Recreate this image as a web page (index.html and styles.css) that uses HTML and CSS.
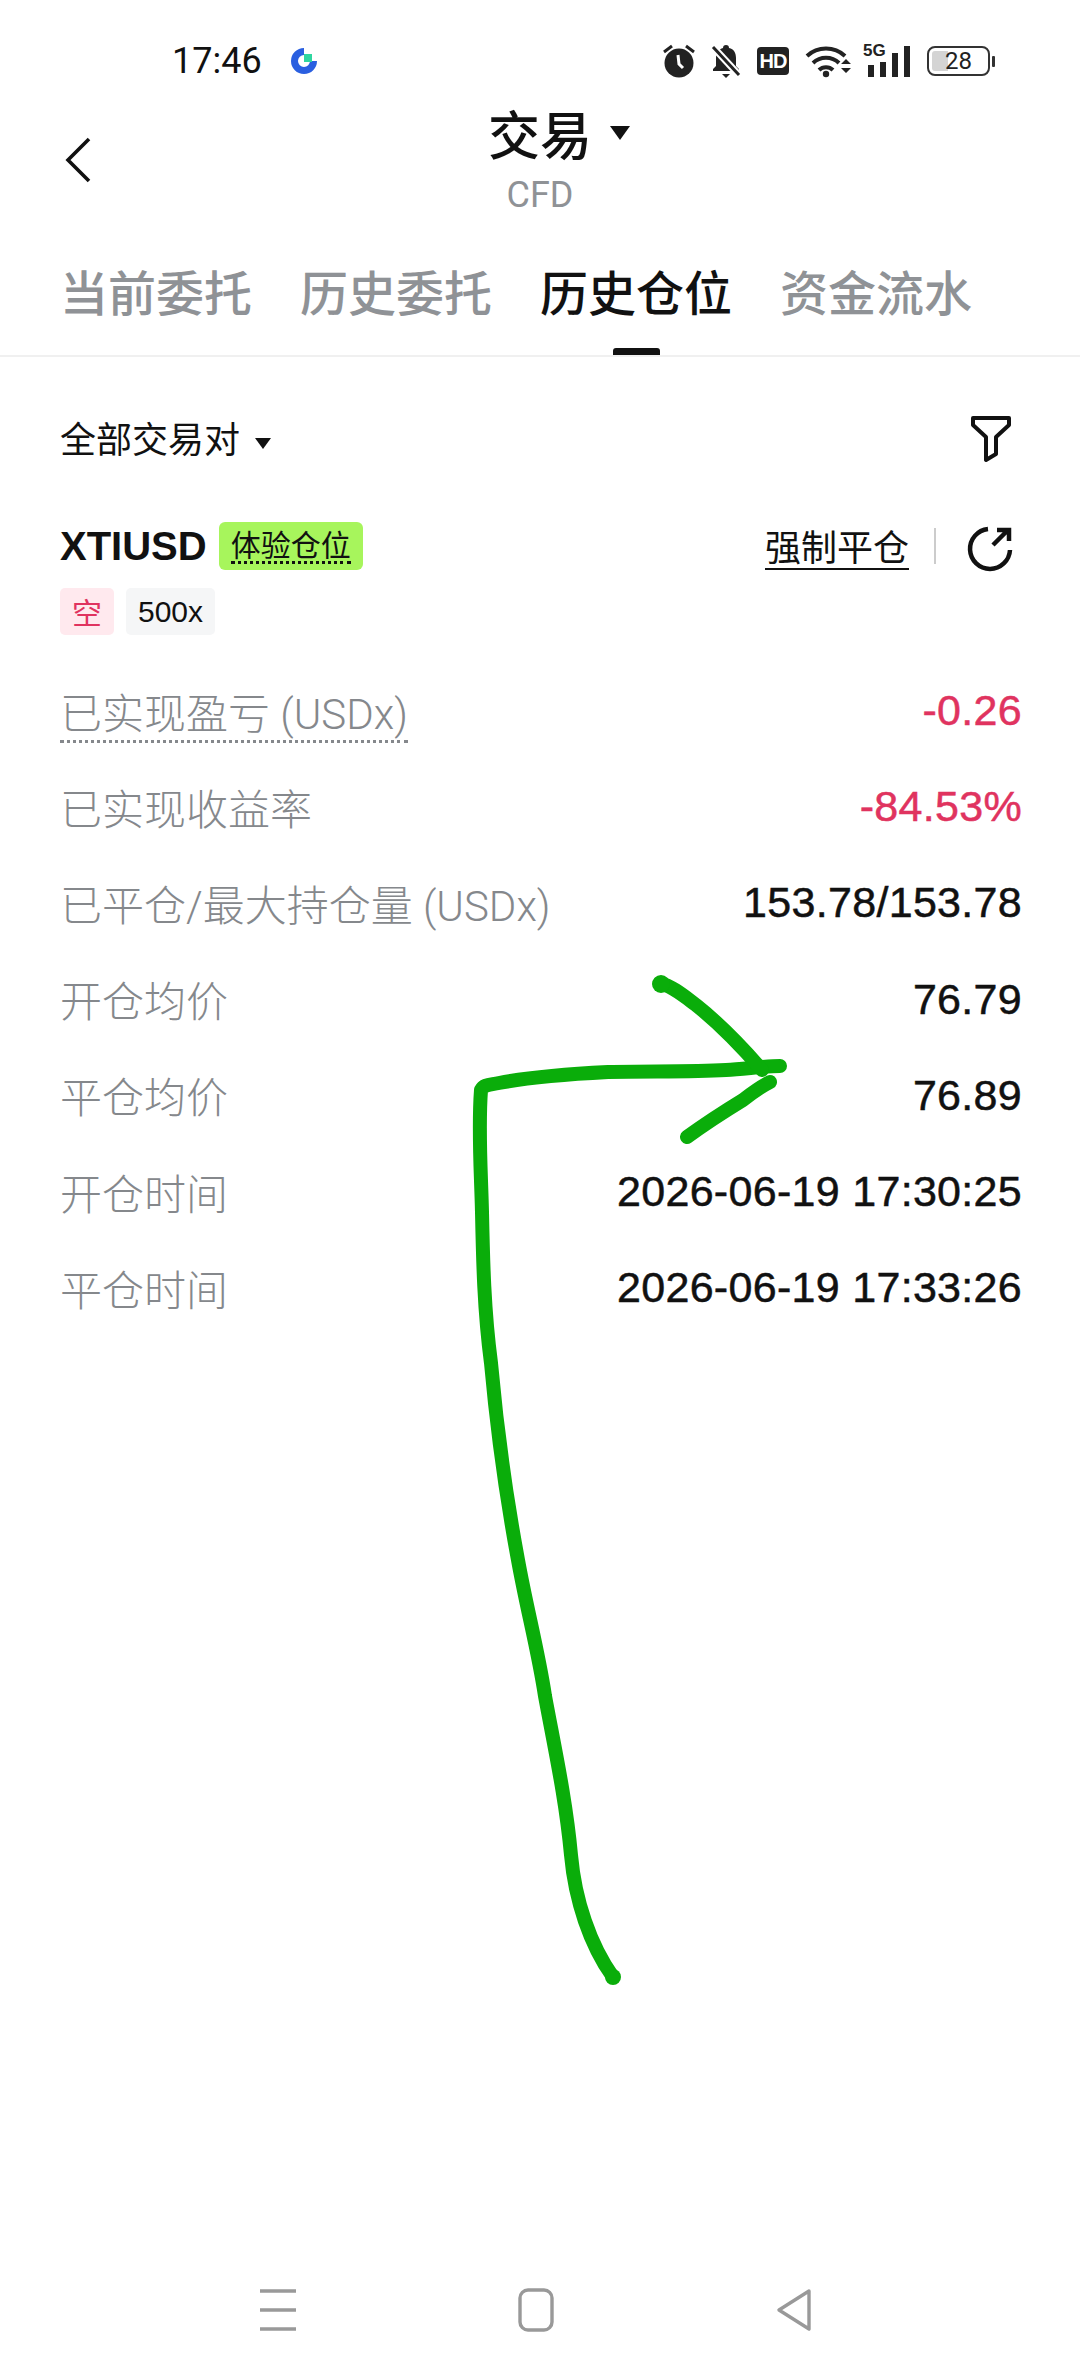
FILE: index.html
```html
<!DOCTYPE html>
<html lang="zh-CN">
<head>
  <meta charset="UTF-8">
  <meta name="viewport" content="width=device-width, initial-scale=1.0">
  <title>交易</title>
  <link rel="stylesheet" href="styles.css">
</head>
<body>

<div class="page">

  <!-- Status bar -->
  <div class="status-bar">
    <div class="status-left">
      <span class="clock">17:46</span>
      <svg class="app-dot" viewBox="0 0 26 26" width="26" height="26">
        <path d="M13 3.5A9.5 9.5 0 1 0 22.5 13" fill="none" stroke="#2a5fe0" stroke-width="7"/>
        <rect x="13" y="6" width="8" height="8" fill="#2fd6a0"/>
      </svg>
    </div>
    <div class="status-right">
      <svg class="icon-alarm" viewBox="0 0 32 34" width="32" height="34">
        <circle cx="16" cy="19" r="14.5" fill="#222"/>
        <path d="M1 8l8-6M31 8l-8-6" stroke="#222" stroke-width="3"/>
        <path d="M15 11l1 9 4 4" fill="none" stroke="#fff" stroke-width="3"/>
      </svg>
      <svg class="icon-bell" viewBox="0 0 30 34" width="30" height="34">
        <path d="M15 1c2 0 3 1 3 3 5 1 7 5 7 10v8l3 3v2H2v-2l3-3v-8c0-5 3-9 7-10 0-2 1-3 3-3z" fill="#222"/>
        <path d="M11 30h8l-4 4z" fill="#222"/>
        <path d="M2 3l26 28" stroke="#fff" stroke-width="7"/>
        <path d="M2 3l26 28" stroke="#222" stroke-width="3"/>
      </svg>
      <span class="hd">HD</span>
      <svg class="icon-wifi" viewBox="0 0 46 34" width="46" height="34">
        <path d="M2 12a28 28 0 0 1 38 0M8 19a19 19 0 0 1 26 0M14 26a10 10 0 0 1 14 0" fill="none" stroke="#222" stroke-width="4"/>
        <circle cx="21" cy="30" r="3.2" fill="#222"/>
        <path d="M36 20l5-5 5 5zM36 24l5 5 5-5z" fill="#222"/>
      </svg>
      <div class="signal">
        <span class="signal-label">5G</span>
        <svg viewBox="0 0 44 32" width="44" height="32">
          <rect x="1" y="20" width="6" height="12" fill="#222"/>
          <rect x="13" y="17" width="6" height="15" fill="#222"/>
          <rect x="25" y="8" width="6" height="24" fill="#222"/>
          <rect x="37" y="1" width="6" height="31" fill="#222"/>
        </svg>
      </div>
      <div class="battery">
        <div class="battery-body">
          <div class="battery-fill"></div>
          <span class="battery-num">28</span>
        </div>
        <div class="battery-nub"></div>
      </div>
    </div>
  </div>

  <!-- Top bar -->
  <header class="top-bar">
    <svg class="back" viewBox="0 0 26 46" width="26" height="46">
      <path d="M24 2L3 23l21 21" fill="none" stroke="#111" stroke-width="3.6"/>
    </svg>
    <div class="title-row">
      <h1>交易</h1>
      <span class="caret caret-big"></span>
    </div>
    <div class="subtitle">CFD</div>
  </header>

  <!-- Tabs -->
  <nav class="tabs">
    <a class="tab">当前委托</a>
    <a class="tab">历史委托</a>
    <a class="tab active">历史仓位</a>
    <a class="tab">资金流水</a>
  </nav>

  <section class="content">
    <div class="filter-row">
      <div class="pair-select">全部交易对<span class="caret"></span></div>
      <svg class="filter-icon" viewBox="0 0 40 48" width="40" height="48">
        <path d="M2 3h36v7L25 22v17l-10 6V22L2 10z" fill="none" stroke="#111" stroke-width="4" stroke-linejoin="round"/>
      </svg>
    </div>

    <div class="symbol-row">
      <div class="symbol">
        <span class="symbol-name">XTIUSD</span>
        <span class="trial-badge"><span>体验仓位</span></span>
      </div>
      <div class="symbol-actions">
        <a class="force-close">强制平仓</a>
        <span class="vline"></span>
        <svg class="share-icon" viewBox="0 0 46 46" width="46" height="46">
          <path d="M21 3A20 20 0 1 0 43 24" fill="none" stroke="#111" stroke-width="4.5"/>
          <path d="M26 19L41 4M30 4h12v11" fill="none" stroke="#111" stroke-width="4.5"/>
        </svg>
      </div>
    </div>

    <div class="tags">
      <span class="tag tag-short">空</span>
      <span class="tag">500x</span>
    </div>

    <dl class="rows">
      <div class="row"><dt><span class="dotted">已实现盈亏 (USDx)</span></dt><dd class="neg">-0.26</dd></div>
      <div class="row"><dt>已实现收益率</dt><dd class="neg">-84.53%</dd></div>
      <div class="row"><dt>已平仓/最大持仓量 (USDx)</dt><dd>153.78/153.78</dd></div>
      <div class="row"><dt>开仓均价</dt><dd>76.79</dd></div>
      <div class="row"><dt>平仓均价</dt><dd>76.89</dd></div>
      <div class="row"><dt>开仓时间</dt><dd>2026-06-19 17:30:25</dd></div>
      <div class="row"><dt>平仓时间</dt><dd>2026-06-19 17:33:26</dd></div>
    </dl>
  </section>

  <!-- Bottom system buttons -->
  <div class="sys-nav">
    <svg viewBox="0 0 36 44" width="36" height="44">
      <path d="M0 3h36M0 22h36M0 41h36" stroke="#999" stroke-width="3.6"/>
    </svg>
    <svg viewBox="0 0 36 44" width="36" height="44">
      <rect x="2" y="2" width="32" height="40" rx="8" fill="none" stroke="#999" stroke-width="3.4"/>
    </svg>
    <svg viewBox="0 0 36 44" width="36" height="44">
      <path d="M33 3L3 22l30 19z" fill="none" stroke="#999" stroke-width="3.4" stroke-linejoin="round"/>
    </svg>
  </div>

  <!-- Hand drawn arrow on top of the page -->
  <svg class="scribble" viewBox="0 0 1080 2376" width="1080" height="2376">
    <g fill="none" stroke="#0aad0a" stroke-width="14" stroke-linecap="round" stroke-linejoin="round">
      <path d="M613 1977C590 1945 575 1900 571 1855C566 1800 555 1750 545 1696C538 1650 527 1610 518 1560C505 1490 497 1430 491 1363C484 1310 483 1260 482 1212C481 1170 478 1130 481 1090C484 1084 490 1085 499 1083C530 1077 570 1074 608 1072C650 1071 690 1072 726 1070C745 1069 765 1066 780 1066"/>
      <path d="M660 983C672 986 684 996 696 1005C720 1024 742 1047 762 1070"/>
      <path d="M687 1137C705 1124 725 1111 743 1100C752 1093 760 1087 770 1082"/>
    </g>
    <circle cx="661" cy="984" r="9" fill="#0aad0a"/>
    <circle cx="613" cy="1977" r="8" fill="#0aad0a"/>
  </svg>

</div>

</body>
</html>
```

FILE: styles.css
```css
* {
  box-sizing: border-box;
}

html, body {
  margin: 0;
  padding: 0;
  background-color: #fff;
}

body {
  font-family: "Liberation Sans", "Noto Sans CJK SC", sans-serif;
  color: #111;
}

.page {
  position: relative;
  width: 1080px;
  height: 2376px;
  display: flex;
  flex-direction: column;
  overflow: hidden;
}

/* Status bar */
.status-bar {
  height: 90px;
  padding: 32px 85px 0 172px;
  display: flex;
  justify-content: space-between;
  align-items: center;
  flex-shrink: 0;
}

.status-left {
  display: flex;
  align-items: center;
  gap: 29px;
}

.clock {
  font-family: Roboto, sans-serif;
  font-size: 36px;
  color: #111;
}

.status-right {
  display: flex;
  align-items: center;
  gap: 16px;
  color: #222;
}

.hd {
  width: 32px;
  height: 28px;
  border-radius: 4px;
  background-color: #222;
  color: #fff;
  font-size: 20px;
  font-weight: bold;
  line-height: 28px;
  text-align: center;
  letter-spacing: -1px;
}

.signal {
  position: relative;
  width: 46px;
  height: 32px;
}

.signal svg {
  display: block;
}

.signal-label {
  position: absolute;
  left: -4px;
  top: -2px;
  font-size: 17px;
  font-weight: bold;
  line-height: 15px;
}

.battery {
  display: flex;
  align-items: center;
  gap: 2px;
  margin-left: -2px;
}

.battery-body {
  position: relative;
  width: 63px;
  height: 30px;
  border: 2px solid #333;
  border-radius: 8px;
  padding: 3px;
}

.battery-fill {
  width: 16px;
  height: 100%;
  border-radius: 3px 0 0 3px;
  background-color: #d4d4d4;
}

.battery-num {
  position: absolute;
  left: 0;
  right: 0;
  top: 0;
  text-align: center;
  font-family: Roboto, sans-serif;
  font-size: 24px;
  line-height: 26px;
  color: #222;
}

.battery-nub {
  width: 3px;
  height: 11px;
  border-radius: 1px;
  background-color: #333;
}

/* Top bar */
.top-bar {
  position: relative;
  height: 122px;
  flex-shrink: 0;
  text-align: center;
}

.back {
  position: absolute;
  left: 65px;
  top: 47px;
}

.title-row {
  display: grid;
  grid-template-columns: 1fr auto 1fr;
  align-items: center;
  column-gap: 18px;
  height: 74px;
  margin-top: 6px;
}

.title-row h1 {
  grid-column: 2;
  margin: 0;
  font-family: "Noto Sans CJK SC", sans-serif;
  font-size: 52px;
  font-weight: 500;
  line-height: 74px;
}

.caret {
  display: inline-block;
  width: 0;
  height: 0;
  border-left: 8px solid transparent;
  border-right: 8px solid transparent;
  border-top: 11px solid #111;
  margin-left: 15px;
  vertical-align: middle;
}

.caret-big {
  grid-column: 3;
  justify-self: start;
  margin-left: 0;
  border-left-width: 10px;
  border-right-width: 10px;
  border-top-width: 14px;
}

.subtitle {
  margin-top: 6px;
  font-family: Roboto, sans-serif;
  font-size: 36px;
  line-height: 38px;
  color: #8f9296;
}

/* Tabs */
.tabs {
  height: 145px;
  flex-shrink: 0;
  padding: 43px 0 0 60px;
  display: flex;
  gap: 48px;
  border-bottom: 2px solid #f0f0f0;
}

.tab {
  position: relative;
  font-family: "Noto Sans CJK SC", sans-serif;
  font-size: 48px;
  line-height: 70px;
  height: 100px;
  color: #8f9296;
  font-weight: 500;
}

.tab.active {
  color: #111;
}

.tab.active::after {
  content: "";
  position: absolute;
  left: 73px;
  bottom: 0;
  width: 47px;
  height: 7px;
  border-radius: 3px 3px 0 0;
  background-color: #111;
}

/* Content */
.content {
  flex: 1;
  padding: 0 57px 0 60px;
}

.filter-row {
  display: flex;
  justify-content: space-between;
  align-items: center;
  height: 108px;
  margin-top: 26px;
  padding-right: 12px;
}

.filter-icon {
  margin-top: 4px;
}

.pair-select {
  font-family: "Noto Sans CJK SC", sans-serif;
  font-size: 36px;
}

.symbol-row {
  display: flex;
  justify-content: space-between;
  align-items: center;
  margin-top: 29px;
  padding-right: 10px;
}

.symbol {
  display: flex;
  align-items: center;
  gap: 12px;
}

.symbol-name {
  font-size: 40px;
  font-weight: bold;
}

.trial-badge {
  height: 48px;
  padding: 0 12px;
  border-radius: 6px;
  background-color: #a7f55c;
  font-family: "Noto Sans CJK SC", sans-serif;
  font-size: 30px;
  line-height: 42px;
}

.trial-badge span {
  display: inline-block;
  height: 42px;
  border-bottom: 3px dotted #111;
}

.symbol-actions {
  display: flex;
  align-items: center;
}

.share-icon {
  margin-top: 6px;
}

.force-close {
  font-family: "Noto Sans CJK SC", sans-serif;
  font-size: 36px;
  line-height: 46px;
  border-bottom: 2px solid #111;
}

.vline {
  width: 2px;
  height: 36px;
  margin: 0 31px 0 25px;
  background-color: #ccc;
}

.tags {
  display: flex;
  gap: 12px;
  margin-top: 16px;
}

.tag {
  height: 47px;
  padding: 0 12px;
  border-radius: 5px;
  background-color: #f5f6f7;
  font-size: 30px;
  line-height: 47px;
}

.tag-short {
  padding: 0 12px;
  background-color: #ffe9ee;
  color: #e0335f;
  font-family: "Noto Sans CJK SC", sans-serif;
}

.rows {
  margin: 27px 0 0;
}

.row {
  display: flex;
  justify-content: space-between;
  align-items: center;
  height: 96.2px;
}

.row dt {
  font-family: Roboto, "Noto Sans CJK SC", sans-serif;
  font-size: 42px;
  font-weight: 300;
  color: #85888c;
}

.row dd {
  margin: 1px 1px 0 0;
  font-size: 43px;
  letter-spacing: 0.3px;
  -webkit-text-stroke: 0.5px currentColor;
  color: #111;
}

.row dd.neg {
  color: #e0335f;
}

.dotted {
  padding-bottom: 1px;
  border-bottom: 3px dotted #85888c;
}

/* System navigation */
.sys-nav {
  height: 122px;
  flex-shrink: 0;
  padding: 0 268px 10px 260px;
  display: flex;
  justify-content: space-between;
  align-items: center;
}

/* Freehand overlay */
.scribble {
  position: absolute;
  left: 0;
  top: 0;
  pointer-events: none;
}
```
